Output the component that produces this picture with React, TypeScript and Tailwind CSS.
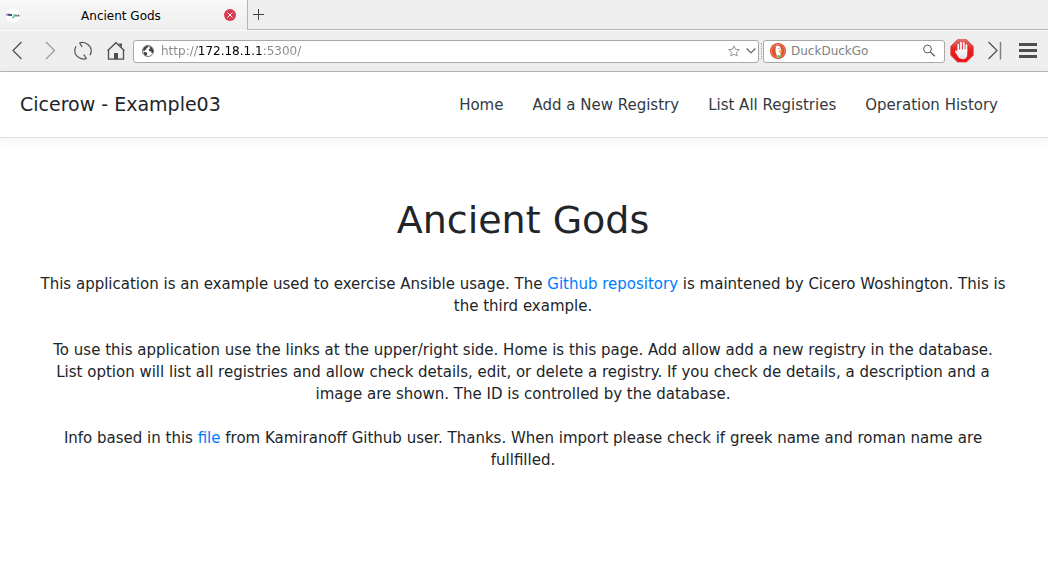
import React from "react";

const navLinks = ["Home", "Add a New Registry", "List All Registries", "Operation History"];

function Favicon() {
  return (
    <svg width="14" height="15" viewBox="0 0 14 15" aria-hidden="true">
      <circle cx="7" cy="7.5" r="7.200" fill="#fff" />
      <path d="M1 5.500v2.200M2.300 6h1.200v1.600H2.300z" stroke="#46407a" strokeWidth="1" fill="none" />
      <path d="M4 7h2M9.300 7.700h1.500M11.500 7.700h1.800" stroke="#46506f" strokeWidth="1.800" fill="none" />
      <path d="M6 9.600h1.500L8.300 7h1.200" stroke="#55c3a0" strokeWidth="1.500" fill="none" />
    </svg>
  );
}

function CloseIcon() {
  return (
    <svg width="12" height="12" viewBox="0 0 12 12" aria-hidden="true">
      <circle cx="6" cy="6" r="6" fill="#dc3c50" />
      <path d="M3.500 3.500l5 5m0-5l-5 5" stroke="#fff" strokeWidth="1" />
    </svg>
  );
}

function BackIcon() {
  return (
    <svg width="20" height="20" viewBox="0 0 20 20" fill="none" aria-hidden="true">
      <path d="M14.500 1L6 9.500l8.500 8.500" stroke="#4d4d4d" strokeWidth="1.200" />
    </svg>
  );
}

function ForwardIcon() {
  return (
    <svg width="20" height="20" viewBox="0 0 20 20" fill="none" aria-hidden="true">
      <path d="M6 1l8.500 8.500L6 18" stroke="#9a9a9a" strokeWidth="1.200" />
    </svg>
  );
}

function ReloadIcon() {
  return (
    <svg width="20" height="20" viewBox="0 0 20 20" fill="none" stroke="#555" strokeWidth="1.200" aria-hidden="true">
      <path d="M6.500 1.800l2.700 4M6.500 1.800C12 .3 17.500 4 18.200 8.500c.2 2-.2 4-1.200 5.700" />
      <path d="M13.500 17.700l-2.700-4M13.500 17.700C8 19.200 2.500 15.500 1.800 11c-.2-2 .2-4 1.200-5.700" />
    </svg>
  );
}

function HomeIcon() {
  return (
    <svg width="20" height="20" viewBox="0 0 20 20" fill="none" stroke="#4d4d4d" aria-hidden="true">
      <path d="M1.500 9.800L10 1.700l8.500 8.100M2.500 9v9.200h15V9" strokeWidth="1.300" />
      <path d="M12.500 2.500h3.500v4z" fill="#4d4d4d" stroke="none" />
      <path d="M8 12h4v6H8z" fill="#4d4d4d" stroke="none" />
    </svg>
  );
}

function GlobeIcon() {
  return (
    <svg width="12" height="12" viewBox="0 0 12 12" aria-hidden="true">
      <circle cx="6" cy="6" r="5.500" fill="#fff" stroke="#666" strokeWidth=".9" />
      <path d="M.8 5L2 2.500 4.500.8l2 .2-.3 1.300-1.600.8-.3 1.500-1.300.5-.6 1.200zM1.500 6.800l1.800.2 2 1-.2 1.400-1.100 1.700-1.700-1.300zM7.300 1l2.600 1.500 1.500 3-.5 2.600-1.400-.2-.2-1.400-1.800-.3-.7-1.500 1.100-1.200z" fill="#444" />
    </svg>
  );
}

function StarIcon() {
  return (
    <svg width="12" height="12" viewBox="0 0 12 12" fill="none" aria-hidden="true">
      <path d="M6 .9l1.500 3.400 3.800.4-2.800 2.600.7 3.700L6 9.200 2.800 11l.7-3.700L.7 4.700l3.800-.4z" stroke="#888" strokeWidth=".9" />
    </svg>
  );
}

function ChevronIcon() {
  return (
    <svg width="10" height="10" viewBox="0 0 10 10" fill="none" aria-hidden="true">
      <path d="M.7 2.500L5 6.800l4.300-4.300" stroke="#555" strokeWidth="1.100" />
    </svg>
  );
}

function DuckIcon() {
  return (
    <svg width="16" height="16" viewBox="0 0 16 16" aria-hidden="true">
      <circle cx="8" cy="8" r="8" fill="#de5030" />
      <circle cx="8" cy="8" r="6.600" fill="none" stroke="#ec9c86" strokeWidth=".6" />
      <path d="M5.500 3.300l1.900-.8c2.500 0 3.700 2 3.500 4.600l-.4 3.400.8 3.200-3.600.7C6.400 12 5.300 9 5.500 6.700c.1-1.400.6-2.300 0-3.400z" fill="#fff" />
      <path d="M8.700 7.200l3.800.4-1 1.500-2.800.5z" fill="#f2b90c" />
      <path d="M7.300 11.800l2 .8 2.200-.9v2.300l-3.500.6z" fill="#61b558" />
      <circle cx="9" cy="5.400" r=".5" fill="#35527a" />
    </svg>
  );
}

function SearchIcon() {
  return (
    <svg width="14" height="14" viewBox="0 0 14 14" fill="none" stroke="#555" aria-hidden="true">
      <circle cx="5.500" cy="5" r="3.900" strokeWidth="1" />
      <path d="M8.300 7.900l4.500 4.300" strokeWidth="1.200" />
    </svg>
  );
}

function BlockerIcon() {
  return (
    <svg width="24" height="24" viewBox="0 0 24 24" aria-hidden="true">
      <defs>
        <linearGradient id="sign-red" x1="0" y1="0" x2="0" y2="1">
          <stop offset="0" stopColor="#dc7070" />
          <stop offset=".45" stopColor="#e32020" />
          <stop offset="1" stopColor="#ee1010" />
        </linearGradient>
        <linearGradient id="palm" x1="0" y1="0" x2="0" y2="1">
          <stop offset="0" stopColor="#ffffff" />
          <stop offset="1" stopColor="#e2dede" />
        </linearGradient>
      </defs>
      <path d="M7.500.5h9l6.800 6.800v9l-6.800 6.800h-9L.7 16.300v-9z" fill="url(#sign-red)" stroke="#dd5050" strokeWidth=".7" />
      <path d="M8.300 12V5.700M11 11V3.600M13.800 11V4M16.400 12V6" fill="none" stroke="#fff" strokeLinecap="round" strokeWidth="1.700" />
      <path d="M7.450 10.500h9.800v5.200c0 2.900-1.700 4.500-4.400 4.500-2.500 0-3.900-1-4.900-2.700l-2.900-4.700c-.5-1.100.7-1.700 1.500-.9l.9 1z" fill="url(#palm)" />
    </svg>
  );
}

function SkipIcon() {
  return (
    <svg width="16" height="20" viewBox="0 0 16 20" fill="none" aria-hidden="true">
      <path d="M1.500 1L10 9.500 1.500 18" stroke="#4d4d4d" strokeWidth="1.200" />
      <path d="M13.500 1v17.500" stroke="#808080" strokeWidth="1.500" />
    </svg>
  );
}

function MenuIcon() {
  return (
    <svg width="18" height="16" viewBox="0 0 18 16" aria-hidden="true">
      <path d="M0 0h18v3H0zM0 6h18v3H0zM0 12h18v3H0z" fill="#4d4d4d" />
    </svg>
  );
}

function BrowserChrome() {
  return (
    <header className="border-b border-[#b6b6b6] bg-[#eeeeee] text-xs">
      <div className="flex h-[30px] items-stretch">
        <div className="flex w-[248px] items-center border-r border-[#b4b4b4] bg-linear-to-b from-[#f8f8f8] to-[#eeeeee] px-1.5">
          <Favicon />
          <span className="flex-1 pt-0.5 pr-0.5 text-center text-black">Ancient Gods</span>
          <button type="button" aria-label="Close tab" className="mr-[5px]">
            <CloseIcon />
          </button>
        </div>
        <div className="flex flex-1 items-center border-b border-[#b4b4b4] px-1">
          <button type="button" aria-label="New tab">
            <svg width="13" height="13" viewBox="0 0 13 13" aria-hidden="true">
              <path d="M6.500 1v11M1 6.500h11" stroke="#444" strokeWidth="1" />
            </svg>
          </button>
        </div>
      </div>
      <div className="flex h-[41px] items-center border-t border-[#fafafa] pr-[11px] pl-[7px]">
        <div className="flex gap-[13px] pr-[7px]">
          <button type="button" aria-label="Back"><BackIcon /></button>
          <button type="button" aria-label="Forward"><ForwardIcon /></button>
          <button type="button" aria-label="Reload"><ReloadIcon /></button>
          <button type="button" aria-label="Home page"><HomeIcon /></button>
        </div>
        <div className="flex h-[23px] min-w-0 flex-1 items-center rounded-[3px] border border-[#a8a8a8] bg-white pr-[2px] pl-2">
          <GlobeIcon />
          <input
            type="text"
            aria-label="Address"
            defaultValue="http://172.18.1.1:5300/"
            className="ml-[7px] min-w-0 flex-1 bg-[linear-gradient(to_right,#888_36px,#000_36px,#000_101px,#888_101px)] bg-clip-text text-transparent caret-black outline-none"
          />
          <button type="button" aria-label="Bookmark this page"><StarIcon /></button>
          <button type="button" aria-label="Show history" className="ml-1.5"><ChevronIcon /></button>
        </div>
        <div className="mx-[1px] flex w-[2px] justify-center">
          <div className="h-4 border-l border-dotted border-[#aaaaaa]" />
        </div>
        <div className="flex h-[23px] w-[182px] items-center rounded-[3px] border border-[#a8a8a8] bg-white px-1.5">
          <DuckIcon />
          <input
            type="search"
            aria-label="Search the web"
            placeholder="DuckDuckGo"
            className="ml-[5px] min-w-0 flex-1 outline-none placeholder:text-[#808080]"
          />
          <button type="button" aria-label="Search" className="mr-0.5"><SearchIcon /></button>
        </div>
        <button type="button" aria-label="Ad blocker" className="ml-[5px]"><BlockerIcon /></button>
        <button type="button" aria-label="Skip to end" className="ml-[13px]"><SkipIcon /></button>
        <button type="button" aria-label="Menu" className="ml-4"><MenuIcon /></button>
      </div>
    </header>
  );
}

export default function App() {
  return (
    <div className="min-h-screen bg-white font-['DejaVu_Sans',sans-serif] text-[#212529] [&_button]:block">
      <BrowserChrome />
      <div className="flex items-center border-b border-[#dee2e6] py-[18px] pr-[50px] pl-5 shadow-[0_4px_12px_rgba(0,0,0,0.05)]">
        <h5 className="flex-1 text-[19px] leading-[29px]">Cicerow - Example03</h5>
        <nav className="flex gap-[29px] text-[15px] leading-[22px] text-[#343a40]">
          {navLinks.map((label) => (
            <a key={label} href="#">{label}</a>
          ))}
        </nav>
      </div>
      <main className="px-[38px] pt-[60px] pr-10 text-center text-[15px] leading-[22px]">
        <h1 className="mb-[30px] text-[38px] leading-[45px]">Ancient Gods</h1>
        <p className="mb-[22px]">
          This application is an example used to exercise Ansible usage. The{" "}
          <a href="#" className="text-[#007bff]">Github repository</a> is maintened by Cicero Woshington. This is the third example.
        </p>
        <p className="mb-[22px]">
          To use this application use the links at the upper/right side. Home is this page. Add allow add a new registry in the database. List option will list all registries and allow check details, edit, or delete a registry. If you check de details, a description and a image are shown. The ID is controlled by the database.
        </p>
        <p>
          Info based in this <a href="#" className="text-[#007bff]">file</a> from Kamiranoff Github user. Thanks. When import please check if greek name and roman name are fullfilled.
        </p>
      </main>
    </div>
  );
}
